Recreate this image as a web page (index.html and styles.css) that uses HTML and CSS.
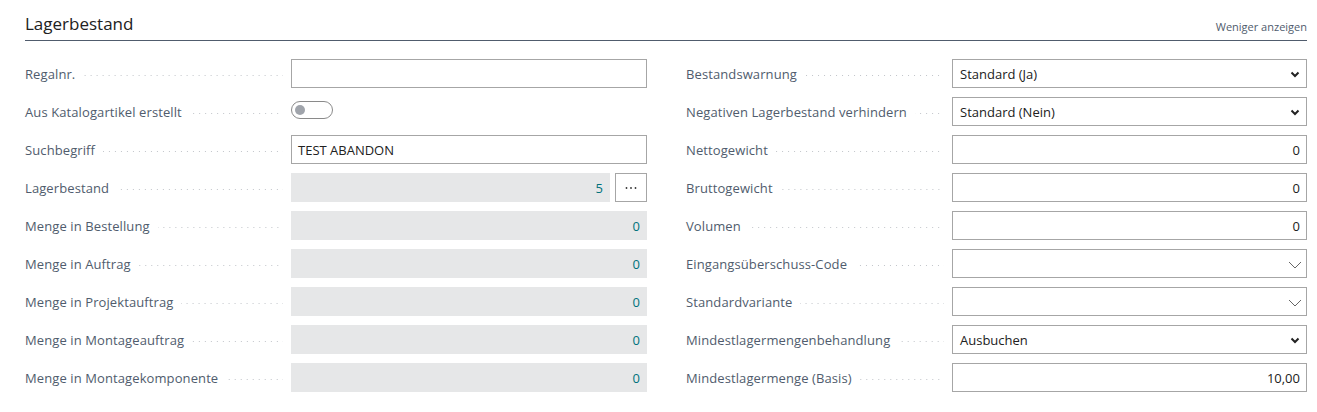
FILE: index.html
```html
<!DOCTYPE html>
<html lang="de">
<head>
	<meta charset="UTF-8">
	<title>Lagerbestand</title>
	<link rel="stylesheet" href="styles.css">
</head>
<body>
	<div class="page">
		<div class="head">
			<h2 class="title">Lagerbestand</h2>
			<a class="less">Weniger anzeigen</a>
		</div>

		<div class="cols">
			<div class="col">
				<div class="row">
					<div class="lbl"><span>Regalnr.</span><i></i></div>
					<div class="fld"></div>
				</div>
				<div class="row">
					<div class="lbl"><span>Aus Katalogartikel erstellt</span><i></i></div>
					<div class="toggle"><b></b></div>
				</div>
				<div class="row">
					<div class="lbl"><span>Suchbegriff</span><i></i></div>
					<div class="fld">TEST ABANDON</div>
				</div>
				<div class="row">
					<div class="lbl"><span>Lagerbestand</span><i></i></div>
					<div class="ro num grow">5</div>
					<div class="more">
						<svg width="12" height="4" viewBox="0 0 12 4"><circle cx="1.5" cy="2" r="0.9" fill="#333"/><circle cx="6" cy="2" r="0.9" fill="#333"/><circle cx="10.5" cy="2" r="0.9" fill="#333"/></svg>
					</div>
				</div>
				<div class="row">
					<div class="lbl"><span>Menge in Bestellung</span><i></i></div>
					<div class="ro num">0</div>
				</div>
				<div class="row">
					<div class="lbl"><span>Menge in Auftrag</span><i></i></div>
					<div class="ro num">0</div>
				</div>
				<div class="row">
					<div class="lbl"><span>Menge in Projektauftrag</span><i></i></div>
					<div class="ro num">0</div>
				</div>
				<div class="row">
					<div class="lbl"><span>Menge in Montageauftrag</span><i></i></div>
					<div class="ro num">0</div>
				</div>
				<div class="row">
					<div class="lbl"><span>Menge in Montagekomponente</span><i></i></div>
					<div class="ro num">0</div>
				</div>
			</div>

			<div class="col">
				<div class="row">
					<div class="lbl"><span>Bestandswarnung</span><i></i></div>
					<div class="fld sel">Standard (Ja)
						<svg class="chev" width="10" height="7" viewBox="0 0 10 7"><polyline points="1.5,1.5 5,5 8.5,1.5" fill="none" stroke="#222" stroke-width="2"/></svg>
					</div>
				</div>
				<div class="row">
					<div class="lbl"><span>Negativen Lagerbestand verhindern</span><i></i></div>
					<div class="fld sel">Standard (Nein)
						<svg class="chev" width="10" height="7" viewBox="0 0 10 7"><polyline points="1.5,1.5 5,5 8.5,1.5" fill="none" stroke="#222" stroke-width="2"/></svg>
					</div>
				</div>
				<div class="row">
					<div class="lbl"><span>Nettogewicht</span><i></i></div>
					<div class="fld num">0</div>
				</div>
				<div class="row">
					<div class="lbl"><span>Bruttogewicht</span><i></i></div>
					<div class="fld num">0</div>
				</div>
				<div class="row">
					<div class="lbl"><span>Volumen</span><i></i></div>
					<div class="fld num">0</div>
				</div>
				<div class="row">
					<div class="lbl"><span>Eingangsüberschuss-Code</span><i></i></div>
					<div class="fld sel">
						<svg class="look" width="14" height="8" viewBox="0 0 14 8"><polyline points="1,1 7,7 13,1" fill="none" stroke="#666" stroke-width="1"/></svg>
					</div>
				</div>
				<div class="row">
					<div class="lbl"><span>Standardvariante</span><i></i></div>
					<div class="fld sel">
						<svg class="look" width="14" height="8" viewBox="0 0 14 8"><polyline points="1,1 7,7 13,1" fill="none" stroke="#666" stroke-width="1"/></svg>
					</div>
				</div>
				<div class="row">
					<div class="lbl"><span>Mindestlagermengenbehandlung</span><i></i></div>
					<div class="fld sel">Ausbuchen
						<svg class="chev" width="10" height="7" viewBox="0 0 10 7"><polyline points="1.5,1.5 5,5 8.5,1.5" fill="none" stroke="#222" stroke-width="2"/></svg>
					</div>
				</div>
				<div class="row">
					<div class="lbl"><span>Mindestlagermenge (Basis)</span><i></i></div>
					<div class="fld num">10,00</div>
				</div>
			</div>
		</div>
	</div>
</body>
</html>
```

FILE: styles.css
```css
*{
	margin: 0;
	padding: 0;
	box-sizing: border-box;
}
body{
	font-family: "Open Sans", "Noto Sans", sans-serif;
	font-size: 13px;
	color: #212121;
	background: #fff;
}
.page{
	padding: 13px 10px 0 25px;
}
.head{
	display: flex;
	justify-content: space-between;
	align-items: flex-end;
	border-bottom: 1px solid #505c6d;
	padding-bottom: 6px;
}
.title{
	font-size: 17px;
	font-weight: 500;
	color: #212121;
	line-height: 21px;
}
.less{
	font-size: 11px;
	color: #505c6d;
	line-height: 14px;
	padding-bottom: 0;
}
.cols{
	display: grid;
	grid-template-columns: 622px 621px;
	column-gap: 39px;
	padding-top: 18px;
}
.col{
	display: flex;
	flex-direction: column;
	gap: 9px;
}
.row{
	display: flex;
	height: 29px;
	align-items: center;
}
.lbl{
	width: 266px;
	flex: none;
	display: flex;
	align-items: center;
	color: #505c6d;
	padding-right: 8px;
	letter-spacing: 0.1px;
}
.lbl span{
	white-space: nowrap;
}
.lbl i{
	flex: 1;
	height: 1px;
	margin: 3px 0 0 8px;
	background-image: linear-gradient(to right, #c2c5ca 1px, transparent 1px);
	background-size: 6px 1px;
	background-repeat: repeat-x;
	background-position: right;
}
.fld{
	flex: 1;
	height: 29px;
	border: 1px solid #a6a6a6;
	padding: 0 6px;
	display: flex;
	align-items: center;
	background: #fff;
}
.sel{
	padding-left: 7px;
	position: relative;
}
.chev{
	position: absolute;
	right: 6px;
	top: 11px;
}
.look{
	position: absolute;
	right: 4px;
	top: 11px;
}
.num{
	justify-content: flex-end;
}
.ro{
	flex: 1;
	height: 29px;
	background: #e6e7e8;
	padding: 0 7px;
	display: flex;
	align-items: center;
	color: #00727c;
}
.grow{
	margin-right: 5px;
}
.more{
	width: 32px;
	height: 29px;
	flex: none;
	border: 1px solid #a6a6a6;
	display: flex;
	align-items: center;
	justify-content: center;
}
.toggle{
	width: 42px;
	height: 18px;
	border: 1px solid #8a8a8a;
	border-radius: 9px;
	position: relative;
	margin-top: -4px;
}
.toggle b{
	position: absolute;
	left: 3px;
	top: 3px;
	width: 10px;
	height: 10px;
	border-radius: 50%;
	background: #a0a4ab;
}
```
